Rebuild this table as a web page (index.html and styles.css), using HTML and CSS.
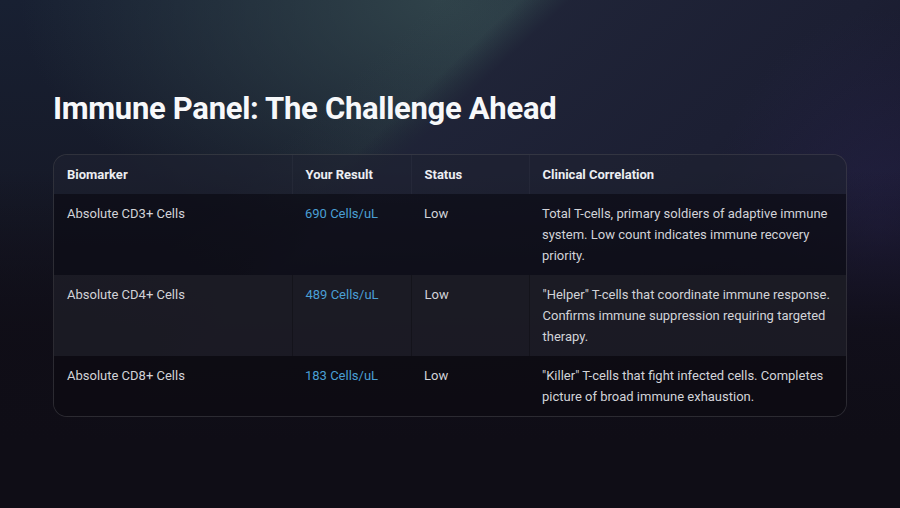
FILE: index.html
```html
<!DOCTYPE html>
<html lang="en">
<head>
<meta charset="utf-8">
<title>Immune Panel</title>
<link rel="stylesheet" href="styles.css">
</head>
<body>
<main class="slide">
  <h1 class="title">Immune Panel: The Challenge Ahead</h1>
  <div class="card">
    <table class="panel">
      <colgroup>
        <col class="c1"><col class="c2"><col class="c3"><col class="c4">
      </colgroup>
      <thead>
        <tr><th>Biomarker</th><th>Your Result</th><th>Status</th><th>Clinical Correlation</th></tr>
      </thead>
      <tbody>
        <tr class="r-dark r-first">
          <td>Absolute CD3+ Cells</td><td class="val">690 Cells/uL</td><td>Low</td>
          <td>Total T-cells, primary soldiers of adaptive immune system. Low count indicates immune recovery priority.</td>
        </tr>
        <tr class="r-light">
          <td>Absolute CD4+ Cells</td><td class="val">489 Cells/uL</td><td>Low</td>
          <td>"Helper" T-cells that coordinate immune response. Confirms immune suppression requiring targeted therapy.</td>
        </tr>
        <tr class="r-dark">
          <td>Absolute CD8+ Cells</td><td class="val">183 Cells/uL</td><td>Low</td>
          <td>"Killer" T-cells that fight infected cells. Completes picture of broad immune exhaustion.</td>
        </tr>
      </tbody>
    </table>
  </div>
</main>
</body>
</html>
```
FILE: styles.css
```css
* { box-sizing: border-box; }
html, body { margin: 0; padding: 0; }
body {
  width: 900px;
  height: 508px;
  overflow: hidden;
  font-family: Roboto, "Liberation Sans", sans-serif;
  color: #e6e6ea;
  background-color: #0f0d16;
  background-image:
    linear-gradient(180deg, rgba(15,13,22,0) 0px, rgba(15,13,22,0) 170px, rgba(15,13,22,0.85) 330px, #0f0d16 440px),
    radial-gradient(ellipse 170px 220px at 880px 230px, rgba(42,38,82,0.5), rgba(42,38,82,0) 100%),
    linear-gradient(137deg, rgba(30,34,54,0) 36%, rgba(31,35,55,0.95) 39.5%, #1c1f33 60%, #17162a 80%),
    linear-gradient(137deg, rgba(70,95,100,0) 30%, rgba(70,95,100,0.07) 36%, rgba(70,95,100,0) 39%),
    radial-gradient(ellipse 420px 250px at 440px 0px, rgba(50,70,76,0.9), rgba(50,70,76,0) 100%),
    linear-gradient(180deg, #182032 0%, #161a29 35%, #12111c 70%, #0f0d16 100%);
}
.slide {
  padding: 89px 53px 0 53px;
}
.title {
  margin: 0 0 25px 0;
  font-size: 31px;
  line-height: 40px;
  font-weight: 700;
  color: #f7f8fa;
  letter-spacing: -0.3px;
}
.card {
  border: 1px solid rgba(255,255,255,0.12);
  border-radius: 14px;
  overflow: hidden;
  width: 794px;
  background: rgba(15,15,22,0.4);
}
.panel {
  width: 100%;
  border-collapse: collapse;
  table-layout: fixed;
  font-size: 13px;
  line-height: 21px;
}
.c1 { width: 238px; }
.c2 { width: 119px; }
.c3 { width: 118px; }
.c4 { width: auto; }
th, td {
  text-align: left;
  vertical-align: top;
  padding: 9px 12px 9px 13px;
}
th {
  font-weight: 700;
  color: #eceef2;
  background: rgba(44,48,68,0.35);
}
th + th { border-left: 1px solid rgba(255,255,255,0.035); }
td { font-weight: 400; color: #d2d3d8; }
.r-dark td { background: rgba(12,11,18,0.72); }
.r-first td { background: rgba(14,14,24,0.6); }
.r-light td { background: rgba(28,28,38,0.88); }
.r-light td + td { border-left: 1px solid rgba(0,0,0,0.25); }
.val { color: #4a9fd4; }
```
